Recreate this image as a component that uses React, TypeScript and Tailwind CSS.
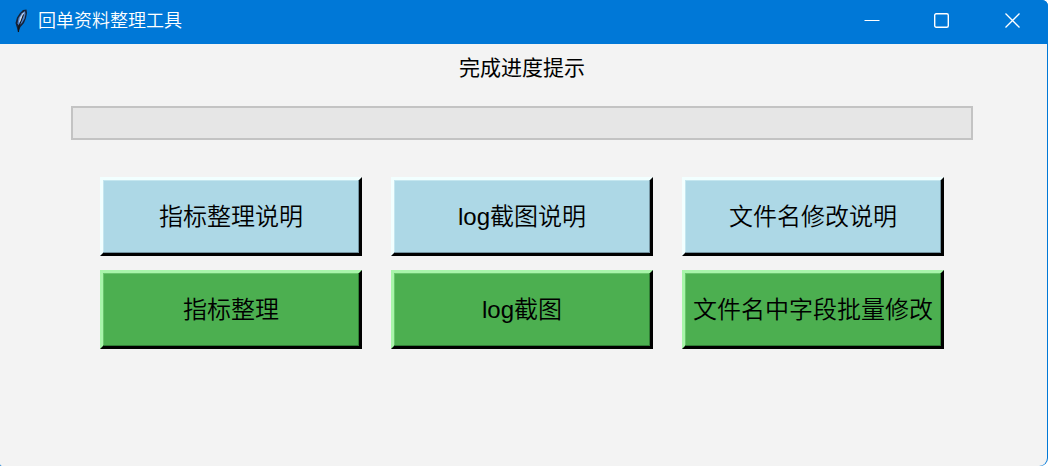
import React from "react";

const explainButtons = ["指标整理说明", "log截图说明", "文件名修改说明"];
const actionButtons = ["指标整理", "log截图", "文件名中字段批量修改"];

const buttonBase =
  "flex h-[79px] items-center justify-center whitespace-nowrap border-3 text-2xl font-[350] text-black";
const explainStyle =
  "border-t-[#f2ffff] border-l-[#f2ffff] border-r-black border-b-black bg-[#add8e6] shadow-[inset_-1px_-1px_0_#7393a0,inset_1px_1px_0_#c4e6ef]";
const actionStyle =
  "border-t-[#a8f5aa] border-l-[#a8f5aa] border-r-black border-b-black bg-[#4caf50] shadow-[inset_-1px_-1px_0_#2f7d34,inset_1px_1px_0_#69c56c]";

function FeatherIcon() {
  return (
    <svg className="h-6 w-4" viewBox="0 0 16 24" aria-hidden="true">
      <path d="M4 23.500 3 19 1.500 14 3 8.500 6 4 9 1 12.500 0.500 13 4 12 9 10 14 6.500 18Z" fill="#152238" />
      <path d="M3.500 14.500 4.500 9 7.500 4.500 11 2 11.500 5 10.500 9.500 8 14 5 16.500Z" fill="#4d80c8" />
      <path d="M5 13 6 8.500 8.500 4.500 10.500 3 8.500 8 6 13.500Z" fill="#c3d6ee" />
      <path d="M9.500 5.500 7.500 11 5 17 4.500 23" fill="none" stroke="#101010" strokeWidth="1" />
    </svg>
  );
}

function TitleBar() {
  return (
    <header className="flex h-11 items-center justify-between bg-[#0078d7] pl-[14px] text-white">
      <div className="flex items-center gap-2 pb-[3px]">
        <FeatherIcon />
        <h1 className="text-lg leading-6 font-[350]">回单资料整理工具</h1>
      </div>
      <div className="flex h-full pb-[3px]">
        <button type="button" aria-label="最小化" className="flex w-[70px] items-center justify-center">
          <svg width="16" height="16" viewBox="0 0 16 16" aria-hidden="true">
            <path d="M0.500 7.500H15.500" stroke="currentColor" />
          </svg>
        </button>
        <button type="button" aria-label="最大化" className="flex w-[70px] items-center justify-center">
          <svg width="16" height="16" viewBox="0 0 16 16" fill="none" aria-hidden="true">
            <rect x="0.700" y="0.700" width="13.600" height="13.600" rx="1.500" stroke="currentColor" strokeWidth="1.400" />
          </svg>
        </button>
        <button type="button" aria-label="关闭" className="flex w-[71px] items-center justify-center">
          <svg width="16" height="16" viewBox="0 0 16 16" aria-hidden="true">
            <path d="M0.500 0.500 14.500 14.500M14.500 0.500 0.500 14.500" stroke="currentColor" strokeWidth="1.300" />
          </svg>
        </button>
      </div>
    </header>
  );
}

export default function App() {
  return (
    <div className="flex min-h-screen flex-col overflow-hidden rounded-tr-md rounded-br-lg bg-[#0078d7] font-['Liberation_Sans','Noto_Sans_CJK_SC',sans-serif]">
      <TitleBar />
      <main className="mr-px flex grow flex-col rounded-br-lg rounded-bl-xs bg-[#f3f3f3] pt-2 pr-[74px] pb-8 pl-[71px]">
        <label htmlFor="progress" className="text-center text-[21px] leading-8 text-black">
          完成进度提示
        </label>
        <progress
          id="progress"
          value={0}
          max={100}
          className="mt-[22px] block h-[34px] w-full appearance-none border-2 border-[#c3c3c3] bg-[#e6e6e6] [&::-webkit-progress-bar]:bg-[#e6e6e6] [&::-webkit-progress-value]:bg-[#06b025]"
        />
        <div className="mx-[29px] mt-[37px] grid grid-cols-3 gap-x-[29px] gap-y-[14px]">
          {explainButtons.map((label) => (
            <button key={label} type="button" className={`${buttonBase} ${explainStyle}`}>
              {label}
            </button>
          ))}
          {actionButtons.map((label) => (
            <button key={label} type="button" className={`${buttonBase} ${actionStyle}`}>
              {label}
            </button>
          ))}
        </div>
      </main>
    </div>
  );
}
